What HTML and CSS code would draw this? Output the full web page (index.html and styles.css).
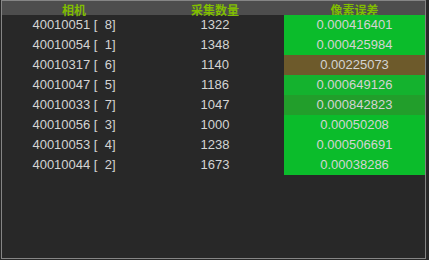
FILE: index.html
```html
<!DOCTYPE html>
<html>
<head>
<meta charset="utf-8">
<link rel="stylesheet" href="styles.css">
</head>
<body>
<div class="frame">
  <div class="grid">
    <div class="hd">相机</div><div class="hd">采集数量</div><div class="hd">像素误差</div>
    <div class="c">40010051 [  8]</div><div class="c">1322</div><div class="c g1">0.000416401</div>
    <div class="c">40010054 [  1]</div><div class="c">1348</div><div class="c g1">0.000425984</div>
    <div class="c">40010317 [  6]</div><div class="c">1140</div><div class="c br">0.00225073</div>
    <div class="c">40010047 [  5]</div><div class="c">1186</div><div class="c g2">0.000649126</div>
    <div class="c">40010033 [  7]</div><div class="c">1047</div><div class="c g3">0.000842823</div>
    <div class="c">40010056 [  3]</div><div class="c">1000</div><div class="c g1">0.00050208</div>
    <div class="c">40010053 [  4]</div><div class="c">1238</div><div class="c g1">0.000506691</div>
    <div class="c">40010044 [  2]</div><div class="c">1673</div><div class="c g1">0.00038286</div>
  </div>
</div>
</body>
</html>
```
FILE: styles.css
```css
html, body {
  margin: 0;
  padding: 0;
  background: #282828;
}
.frame {
  margin-left: 1px;
  width: 425px;
  height: 259px;
  box-sizing: border-box;
  border: 1px solid #858585;
  background: #282828;
}
.grid {
  display: grid;
  grid-template-columns: 144px 138px 141px;
  grid-template-rows: 14px repeat(8, 20px);
}
.hd {
  background: #4d4d4d;
  color: #80bd00;
  font-family: "Noto Sans CJK SC", sans-serif;
  font-weight: bold;
  font-size: 12px;
  line-height: 14px;
  text-align: center;
  padding-top: 2px;
  height: 14px;
  box-sizing: border-box;
  overflow: visible;
}
.c {
  color: #d4d4d4;
  font-family: "Liberation Sans", Arial, sans-serif;
  font-size: 13px;
  line-height: 20px;
  text-align: center;
  white-space: pre;
}
.g1 { background: #0bbc2b; }
.g2 { background: #14b22e; }
.g3 { background: #229e2b; }
.br { background: #6d5a2b; }
```
